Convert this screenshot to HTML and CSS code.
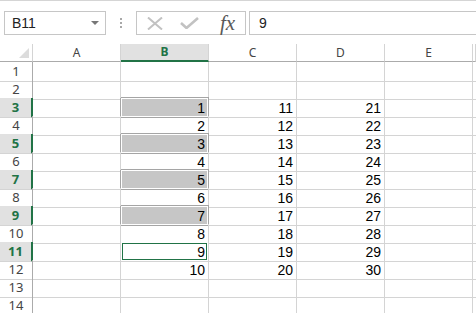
FILE: index.html
```html
<!DOCTYPE html>
<html lang="en">
<head>
  <meta charset="UTF-8">
  <title>Sheet1</title>
  <link rel="stylesheet" href="styles.css">
</head>
<body>
<div class="formula-bar">
  <div class="name-box">
    <span>B11</span>
    <span class="caret"></span>
  </div>
  <div class="grip"><i></i><i></i><i></i></div>
  <div class="fx-box">
    <svg class="icon" width="16" height="13" viewBox="0 0 16 13">
      <path d="M1 0.5 L15 12.5 M15 0.5 L1 12.5" stroke="#c2c2c2" stroke-width="2" fill="none"/>
    </svg>
    <svg class="icon" width="19" height="12" viewBox="0 0 19 12">
      <path d="M1 6 L6.5 11 L18 1" stroke="#c2c2c2" stroke-width="2.6" fill="none"/>
    </svg>
    <span class="fx">fx</span>
  </div>
  <div class="input">9</div>
</div>

<div class="sheet">
  <!-- column headers -->
  <div class="row head">
    <div class="corner"><span class="tri"></span></div>
    <div class="ch">A</div>
    <div class="ch active">B</div>
    <div class="ch">C</div>
    <div class="ch">D</div>
    <div class="ch">E</div>
    <div class="ch"></div>
  </div>

  <div class="row"><div class="rh">1</div><div class="c"></div><div class="c"></div><div class="c"></div><div class="c"></div><div class="c"></div><div class="c"></div></div>
  <div class="row"><div class="rh">2</div><div class="c"></div><div class="c"></div><div class="c"></div><div class="c"></div><div class="c"></div><div class="c"></div></div>
  <div class="row"><div class="rh active">3</div><div class="c"></div><div class="c mark">1</div><div class="c">11</div><div class="c">21</div><div class="c"></div><div class="c"></div></div>
  <div class="row"><div class="rh">4</div><div class="c"></div><div class="c">2</div><div class="c">12</div><div class="c">22</div><div class="c"></div><div class="c"></div></div>
  <div class="row"><div class="rh active">5</div><div class="c"></div><div class="c mark">3</div><div class="c">13</div><div class="c">23</div><div class="c"></div><div class="c"></div></div>
  <div class="row"><div class="rh">6</div><div class="c"></div><div class="c">4</div><div class="c">14</div><div class="c">24</div><div class="c"></div><div class="c"></div></div>
  <div class="row"><div class="rh active">7</div><div class="c"></div><div class="c mark">5</div><div class="c">15</div><div class="c">25</div><div class="c"></div><div class="c"></div></div>
  <div class="row"><div class="rh">8</div><div class="c"></div><div class="c">6</div><div class="c">16</div><div class="c">26</div><div class="c"></div><div class="c"></div></div>
  <div class="row"><div class="rh active">9</div><div class="c"></div><div class="c mark">7</div><div class="c">17</div><div class="c">27</div><div class="c"></div><div class="c"></div></div>
  <div class="row"><div class="rh">10</div><div class="c"></div><div class="c">8</div><div class="c">18</div><div class="c">28</div><div class="c"></div><div class="c"></div></div>
  <div class="row"><div class="rh active">11</div><div class="c"></div><div class="c selected">9</div><div class="c">19</div><div class="c">29</div><div class="c"></div><div class="c"></div></div>
  <div class="row"><div class="rh">12</div><div class="c"></div><div class="c">10</div><div class="c">20</div><div class="c">30</div><div class="c"></div><div class="c"></div></div>
  <div class="row"><div class="rh">13</div><div class="c"></div><div class="c"></div><div class="c"></div><div class="c"></div><div class="c"></div><div class="c"></div></div>
  <div class="row"><div class="rh">14</div><div class="c"></div><div class="c"></div><div class="c"></div><div class="c"></div><div class="c"></div><div class="c"></div></div>
</div>
</body>
</html>
```

FILE: styles.css
```css
body {
  margin: 0;
  background: #fff;
  font-family: 'Liberation Sans', Arial, sans-serif;
  color: #000;
  overflow: hidden;
}

/* formula bar */
.formula-bar {
  height: 44px;
  border-top: 1px solid #d5d5d5;
  display: flex;
  align-items: flex-start;
  padding-top: 10px;
  box-sizing: border-box;
}
.name-box {
  margin-left: 4px;
  width: 102px;
  height: 24px;
  box-sizing: border-box;
  border: 1px solid #c6c6c6;
  display: flex;
  align-items: center;
  justify-content: space-between;
  padding: 0 6px 0 7px;
  font-size: 14px;
  color: #222;
}
.caret {
  width: 0;
  height: 0;
  border-left: 4px solid transparent;
  border-right: 4px solid transparent;
  border-top: 4px solid #777;
}
.grip {
  width: 30px;
  height: 24px;
  display: flex;
  flex-direction: column;
  align-items: center;
  justify-content: center;
  gap: 2px;
}
.grip i {
  width: 2px;
  height: 2px;
  background: #a8a8a8;
}
.fx-box {
  width: 110px;
  height: 24px;
  box-sizing: border-box;
  border: 1px solid #c6c6c6;
  display: flex;
  align-items: center;
  padding-left: 10px;
  gap: 17px;
}
.fx {
  font-family: 'Liberation Serif', 'Times New Roman', serif;
  font-style: italic;
  font-size: 21px;
  color: #595959;
  margin-left: 4px;
  line-height: 20px;
}
.input {
  margin-left: 3px;
  flex: 1;
  height: 24px;
  box-sizing: border-box;
  border: 1px solid #c6c6c6;
  border-right: none;
  padding-left: 9px;
  font-size: 14px;
  line-height: 22px;
  color: #222;
}

/* grid */
.sheet {
  display: flex;
  flex-direction: column;
}
.row {
  display: grid;
  grid-template-columns: 33px repeat(5, 88px) 1fr;
  height: 18px;
}
.row > div {
  box-sizing: border-box;
  border-right: 1px solid #d4d4d4;
  border-bottom: 1px solid #d4d4d4;
}
.head > div {
  border-bottom-color: #ababab;
}
.corner {
  display: flex;
  justify-content: flex-end;
  align-items: flex-end;
  padding: 0 3px 3px 0;
}
.tri {
  width: 0;
  height: 0;
  border-left: 10px solid transparent;
  border-bottom: 10px solid #dcdcdc;
}
.ch {
  text-align: center;
  font-family: 'Noto Sans', sans-serif;
  font-size: 12px;
  line-height: 17px;
  color: #444;
}
.ch.active {
  background: #e1e1e1;
  color: #217346;
  font-weight: bold;
  border-bottom: 2px solid #217346 !important;
  line-height: 16px;
}
.rh {
  text-align: center;
  font-family: 'Noto Sans', sans-serif;
  font-size: 13px;
  line-height: 19px;
  color: #444;
  border-right-color: #ababab !important;
}
.rh.active {
  background: #e1e1e1;
  color: #217346;
  font-weight: bold;
  border-right: 2px solid #217346 !important;
}
.c {
  text-align: right;
  padding: 3px 3px 0 0;
  font-size: 14px;
  line-height: 15px;
}
.c.mark {
  background: #c6c6c6;
  border-right-color: #a5a5a5;
  border-bottom-color: #a5a5a5;
  box-shadow: inset 0 0 0 1px #fff, 0 -1px 0 #a5a5a5, -1px 0 0 #a5a5a5;
}
.c.selected {
  box-shadow: inset 0 0 0 1px #fff, inset 0 0 0 2px #217346;
}
```
